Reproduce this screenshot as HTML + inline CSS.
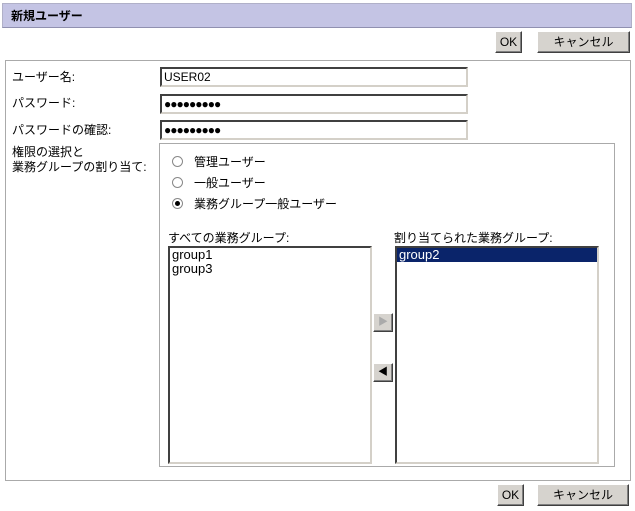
<!DOCTYPE html>
<html><head><meta charset="utf-8"><style>
body{margin:0;width:635px;height:511px;background:#fff;font-family:"Liberation Sans","Noto Sans CJK JP",sans-serif;font-size:12px;color:#000;position:relative;overflow:hidden}
.a{position:absolute}
.btn{position:absolute;background:#d6d3ce;border:1px solid;border-color:#fff #404040 #404040 #fff;box-shadow:inset -1px -1px #808080;text-align:center;font-size:12px;line-height:20px;box-sizing:border-box}
.inp{position:absolute;left:160px;width:308px;height:20px;box-sizing:border-box;border:2px solid;border-color:#404040 #d4d0c8 #d4d0c8 #404040;line-height:16px;padding-left:2px;font-size:12px}
.list{position:absolute;top:246px;width:204px;height:218px;box-sizing:border-box;border:2px solid;border-color:#404040 #d4d0c8 #d4d0c8 #404040;background:#fff;font-size:13px;line-height:14px}
.rad{position:absolute;left:172px;width:9px;height:9px;border:1px solid #888;border-radius:50%;background:#fff}
</style></head><body>
<div class="a" style="left:2px;top:3px;width:628px;height:23px;background:#c4c4e4;border:1px solid #b0b0c8;border-bottom-color:#9090b0"></div>
<div class="a" style="left:11px;top:7px;font-weight:bold;font-size:12px">新規ユーザー</div>
<div class="btn" style="left:495px;top:31px;width:27px;height:22px">OK</div>
<div class="btn" style="left:537px;top:31px;width:93px;height:22px">キャンセル</div>
<div class="a" style="left:5px;top:60px;width:624px;height:419px;border:1px solid #aaa"></div>
<div class="a" style="left:12px;top:68px">ユーザー名:</div>
<div class="a" style="left:12px;top:94px">パスワード:</div>
<div class="a" style="left:12px;top:121px">パスワードの確認:</div>
<div class="inp" style="top:67px">USER02</div>
<div class="inp" style="top:94px;font-weight:bold;letter-spacing:-1px">●●●●●●●●●</div>
<div class="inp" style="top:120px;font-weight:bold;letter-spacing:-1px">●●●●●●●●●</div>
<div class="a" style="left:12px;top:145px;line-height:15px">権限の選択と<br>業務グループの割り当て:</div>
<div class="a" style="left:159px;top:143px;width:454px;height:322px;border:1px solid #aaa"></div>
<div class="rad" style="top:156px"></div><div class="a" style="left:194px;top:153px">管理ユーザー</div>
<div class="rad" style="top:177px"></div><div class="a" style="left:194px;top:174px">一般ユーザー</div>
<div class="rad" style="top:198px"></div><div class="a" style="left:175px;top:201px;width:5px;height:5px;border-radius:50%;background:#000"></div><div class="a" style="left:194px;top:195px">業務グループ一般ユーザー</div>
<div class="a" style="left:168px;top:229px">すべての業務グループ:</div>
<div class="a" style="left:394px;top:229px">割り当てられた業務グループ:</div>
<div class="list" style="left:168px"><div style="padding-left:2px">group1</div><div style="padding-left:2px">group3</div></div>
<div class="list" style="left:395px"><div style="background:#0a246a;color:#fff;padding-left:2px">group2</div></div>
<div class="btn" style="left:373px;top:313px;width:20px;height:19px;line-height:17px;color:#aaa;font-size:10px">▶</div>
<div class="btn" style="left:373px;top:363px;width:20px;height:19px;line-height:17px;font-size:10px">◀</div>
<div class="btn" style="left:497px;top:484px;width:27px;height:22px">OK</div>
<div class="btn" style="left:537px;top:484px;width:92px;height:22px">キャンセル</div>
</body></html>
